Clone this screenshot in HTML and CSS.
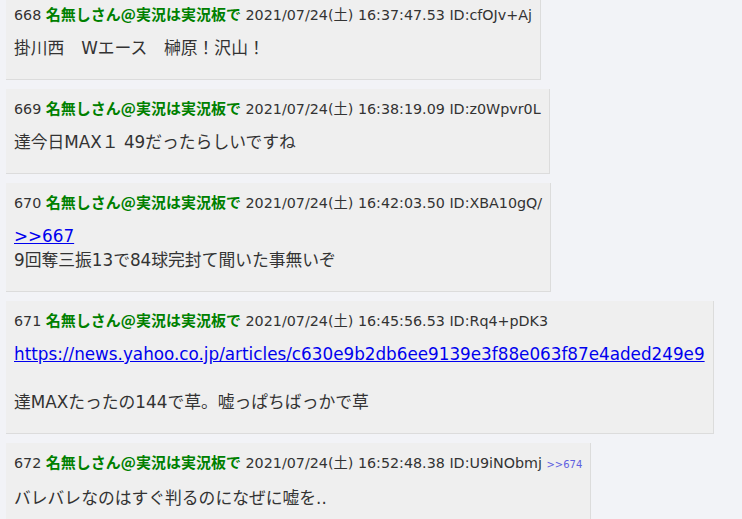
FILE: index.html
```html
<!DOCTYPE html>
<html lang="ja">
<head>
<meta charset="utf-8">
<link rel="stylesheet" href="styles.css">
</head>
<body>
<div class="thread">
  <div class="post">
    <div class="meta"><span class="num">668</span> <span class="name">名無しさん@実況は実況板で</span> <span class="date">2021/07/24(土) 16:37:47.53</span> <span class="uid">ID:cfOJv+Aj</span></div>
    <div class="message">掛川西　Wエース　榊原！沢山！</div>
  </div>
  <div class="post">
    <div class="meta"><span class="num">669</span> <span class="name">名無しさん@実況は実況板で</span> <span class="date">2021/07/24(土) 16:38:19.09</span> <span class="uid">ID:z0Wpvr0L</span></div>
    <div class="message">達今日MAX１ 49だったらしいですね</div>
  </div>
  <div class="post">
    <div class="meta"><span class="num">670</span> <span class="name">名無しさん@実況は実況板で</span> <span class="date">2021/07/24(土) 16:42:03.50</span> <span class="uid">ID:XBA10gQ/</span></div>
    <div class="message"><a href="#" class="reply">&gt;&gt;667</a><br>9回奪三振13で84球完封て聞いた事無いぞ</div>
  </div>
  <div class="post">
    <div class="meta"><span class="num">671</span> <span class="name">名無しさん@実況は実況板で</span> <span class="date">2021/07/24(土) 16:45:56.53</span> <span class="uid">ID:Rq4+pDK3</span></div>
    <div class="message"><a href="#">https://news.yahoo.co.jp/articles/c630e9b2db6ee9139e3f88e063f87e4aded249e9</a><br><br>達MAXたったの144で草。嘘っぱちばっかで草</div>
  </div>
  <div class="post">
    <div class="meta"><span class="num">672</span> <span class="name">名無しさん@実況は実況板で</span> <span class="date">2021/07/24(土) 16:52:48.38</span> <span class="uid">ID:U9iNObmj</span> <a href="#" class="back">&gt;&gt;674</a></div>
    <div class="message">バレバレなのはすぐ判るのになぜに嘘を..</div>
  </div>
</div>
</body>
</html>
```
FILE: styles.css
```css
html, body {
  margin: 0;
  padding: 0;
  background: #f2f3f7;
  overflow: hidden;
}
body {
  font-family: "DejaVu Sans", "Noto Sans CJK JP", sans-serif;
  color: #333;
}
.thread {
  display: flex;
  flex-direction: column;
  align-items: flex-start;
  gap: 9px;
  margin-top: -5px;
  padding-left: 6px;
}
.post {
  background: #efefef;
  border-right: 1px solid #dcdcdc;
  border-bottom: 1px solid #dcdcdc;
  padding: 8px 8px 19px 8px;
}
.meta {
  font-size: 14.3px;
  line-height: 22px;
  white-space: nowrap;
}
.name {
  color: #008000;
  font-weight: bold;
  font-size: 15px;
  font-family: "Noto Sans CJK JP", sans-serif;
}
.back {
  font-size: 10px;
  color: #6060e0;
  text-decoration: none;
}
.message {
  margin-top: 10px;
  font-size: 16.8px;
  line-height: 24px;
  white-space: nowrap;
}
.message a {
  color: #0000ee;
}
```
